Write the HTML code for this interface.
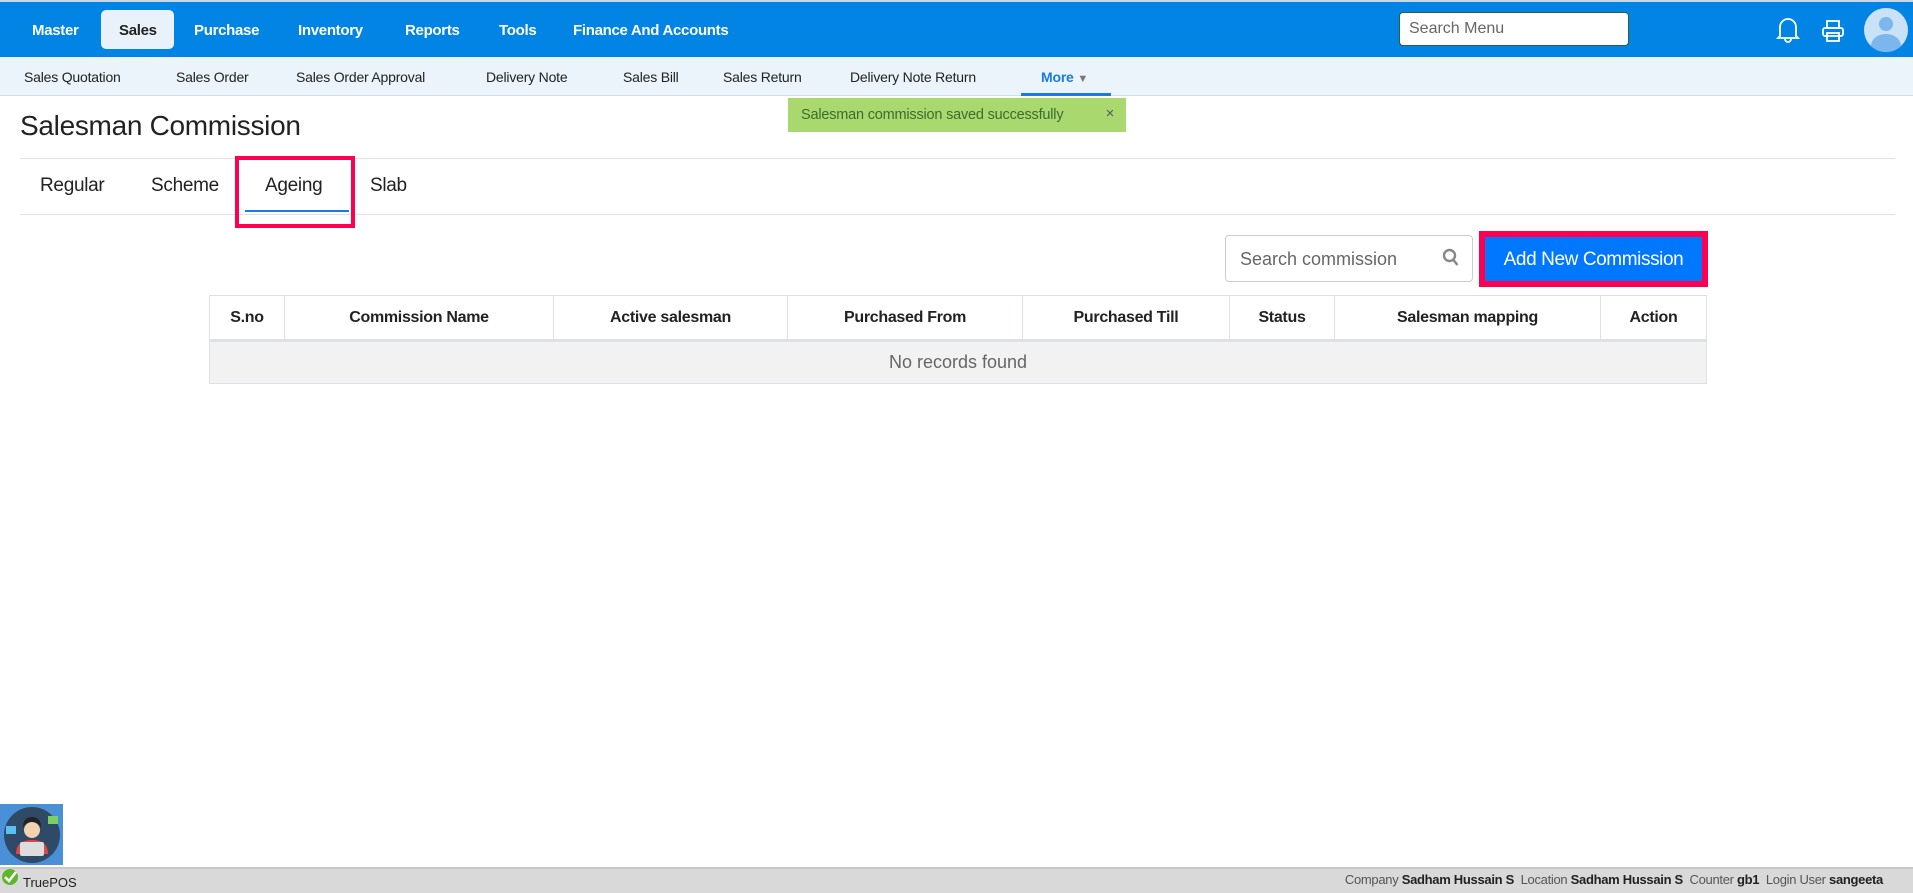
<!DOCTYPE html>
<html><head><meta charset="utf-8"><style>
*{box-sizing:border-box;margin:0;padding:0}
body{width:1913px;height:893px;position:relative;overflow:hidden;background:#fff;font-family:"Liberation Sans",sans-serif;color:#222}
.a{position:absolute;white-space:nowrap}
.top{position:absolute;left:0;top:0;width:1913px;height:57px;background:#0184e4;border-top:2px solid #c8d8e8}
.mi{position:absolute;top:20px;color:#fff;font-weight:bold;font-size:15px;letter-spacing:-0.3px}
.sub{position:absolute;left:0;top:57px;width:1913px;height:39px;background:#ebf3fb;border-bottom:1px solid #cfdff0}
.si{position:absolute;top:12px;font-size:14px;color:#222;letter-spacing:-0.2px}
.tab{position:absolute;top:175px;font-size:19px;color:#222;letter-spacing:-0.3px}
th{font-weight:bold;font-size:16px;color:#222;border:1px solid #dde1e5;height:45px;letter-spacing:-0.3px}
</style></head><body>
<div class="top">
 <div class="a" style="left:101px;top:8px;width:73px;height:39px;background:#e9f2fb;border-radius:5px"></div>
 <div class="mi" style="left:32px">Master</div>
 <div class="mi" style="left:119px;color:#222">Sales</div>
 <div class="mi" style="left:194px">Purchase</div>
 <div class="mi" style="left:298px">Inventory</div>
 <div class="mi" style="left:405px">Reports</div>
 <div class="mi" style="left:499px">Tools</div>
 <div class="mi" style="left:573px">Finance And Accounts</div>
 <div class="a" style="left:1399px;top:10px;width:230px;height:34px;background:#fff;border:1px solid #2f5f3f;border-radius:4px;color:#666;font-size:16px;padding:7px 9px">Search Menu</div>
 <svg class="a" style="left:1776px;top:14px" width="24" height="28" viewBox="0 0 24 28" fill="none" stroke="#fff" stroke-width="1.8"><path d="M4 20V11a8 8 0 0 1 16 0v9l2 2H2z"/><path d="M9 23a3 3 0 0 0 6 0"/></svg>
 <svg class="a" style="left:1821px;top:17px" width="24" height="24" viewBox="0 0 24 24" fill="none" stroke="#fff" stroke-width="1.8"><rect x="6" y="2" width="12" height="7"/><rect x="2" y="9" width="20" height="8" rx="2"/><rect x="6" y="14" width="12" height="8"/></svg>
 <svg class="a" style="left:1864px;top:6px" width="44" height="44" viewBox="0 0 44 44"><circle cx="22" cy="22" r="22" fill="#c9e2f8"/><circle cx="22" cy="16" r="7" fill="#7bb6ec"/><path d="M7 38a15 12 0 0 1 30 0a22 22 0 0 1-30 0z" fill="#7bb6ec"/></svg>
</div>
<div class="sub">
 <div class="si" style="left:24px">Sales Quotation</div>
 <div class="si" style="left:176px">Sales Order</div>
 <div class="si" style="left:296px">Sales Order Approval</div>
 <div class="si" style="left:486px">Delivery Note</div>
 <div class="si" style="left:623px">Sales Bill</div>
 <div class="si" style="left:723px">Sales Return</div>
 <div class="si" style="left:850px">Delivery Note Return</div>
 <div class="si" style="left:1041px;color:#1a7be0;font-weight:bold">More <span style="color:#777;font-size:11px">&#9660;</span></div>
 <div class="a" style="left:1021px;top:36px;width:90px;height:3px;background:#1a7be0"></div>
</div>
<div class="a" style="left:788px;top:98px;width:338px;height:34px;background:#a9d86e;color:#3d6b30;font-size:14.5px;padding:9px 13px;letter-spacing:-0.2px">Salesman commission saved successfully<span style="position:absolute;right:12px;top:8px;color:#556">×</span></div>
<div class="a" style="left:20px;top:110px;font-size:28px;color:#222;letter-spacing:-0.3px">Salesman Commission</div>
<div class="a" style="left:20px;top:158px;width:1875px;height:1px;background:#e2e2e2"></div>
<div class="a" style="left:20px;top:214px;width:1875px;height:1px;background:#e2e2e2"></div>
<div class="tab" style="left:40px">Regular</div>
<div class="tab" style="left:151px">Scheme</div>
<div class="tab" style="left:265px">Ageing</div>
<div class="tab" style="left:370px">Slab</div>
<div class="a" style="left:245px;top:210px;width:104px;height:2px;background:#1a7be0"></div>
<div class="a" style="left:235px;top:156px;width:120px;height:72px;border:4px solid #ff0050"></div>
<div class="a" style="left:1225px;top:235px;width:248px;height:47px;border:1px solid #ccc;border-radius:4px;font-size:18px;color:#666;padding:13px 14px">Search commission
 <svg style="position:absolute;right:12px;top:12px" width="18" height="20" viewBox="0 0 18 20" fill="none" stroke="#888" stroke-width="2.4"><circle cx="7.5" cy="7.5" r="5.5"/><path d="M11.5 12l4 5"/></svg></div>
<div class="a" style="left:1479px;top:231px;width:229px;height:56px;background:#ff0050;padding:6px"><div style="background:#0077ff;height:44px;color:#fff;font-size:19px;text-align:center;line-height:46px;letter-spacing:-0.4px">Add New Commission</div></div>
<table class="a" style="left:209px;top:295px;width:1498px;border-collapse:collapse">
<tr><th style="width:75px">S.no</th><th style="width:269px">Commission Name</th><th style="width:234px">Active salesman</th><th style="width:235px">Purchased From</th><th style="width:207px">Purchased Till</th><th style="width:105px">Status</th><th style="width:266px">Salesman mapping</th><th>Action</th></tr>
<tr><td colspan="8" style="height:43px;background:#f2f2f2;border:1px solid #dde1e5;border-top:3px solid #dde1e5;text-align:center;color:#666;font-size:18px">No records found</td></tr>
</table>
<svg class="a" style="left:0;top:804px" width="63" height="61" viewBox="0 0 63 61"><rect width="63" height="61" fill="#4a90d9"/><circle cx="32" cy="31" r="28" fill="#2e4a66"/><path d="M16 50q0-14 16-14t16 14z" fill="#e04848"/><circle cx="32" cy="26" r="8" fill="#f3d2b0"/><path d="M23 24q0-11 9-11t9 11q-2-6-9-6t-9 6z" fill="#222"/><rect x="20" y="38" width="24" height="14" rx="2" fill="#ddd"/><rect x="6" y="22" width="10" height="8" fill="#5bc0f0"/><rect x="48" y="12" width="10" height="8" fill="#7cd060"/></svg>
<div class="a" style="left:0;top:867px;width:1913px;height:26px;background:#d9d9d9;border-top:2px solid #c8c8c8"></div>
<svg class="a" style="left:1px;top:868px" width="18" height="18" viewBox="0 0 18 18"><circle cx="9" cy="9" r="8" fill="#5cb82a"/><path d="M4 9l4 4 7-9" fill="none" stroke="#fff" stroke-width="2.5"/></svg>
<div class="a" style="left:23px;top:875px;font-size:13px;color:#222">TruePOS</div>
<div class="a" style="right:30px;top:872px;font-size:13px;color:#555;letter-spacing:-0.3px">Company <b style="color:#222">Sadham Hussain S</b> &nbsp;Location <b style="color:#222">Sadham Hussain S</b> &nbsp;Counter <b style="color:#222">gb1</b> &nbsp;Login User <b style="color:#222">sangeeta</b></div>
</body></html>
